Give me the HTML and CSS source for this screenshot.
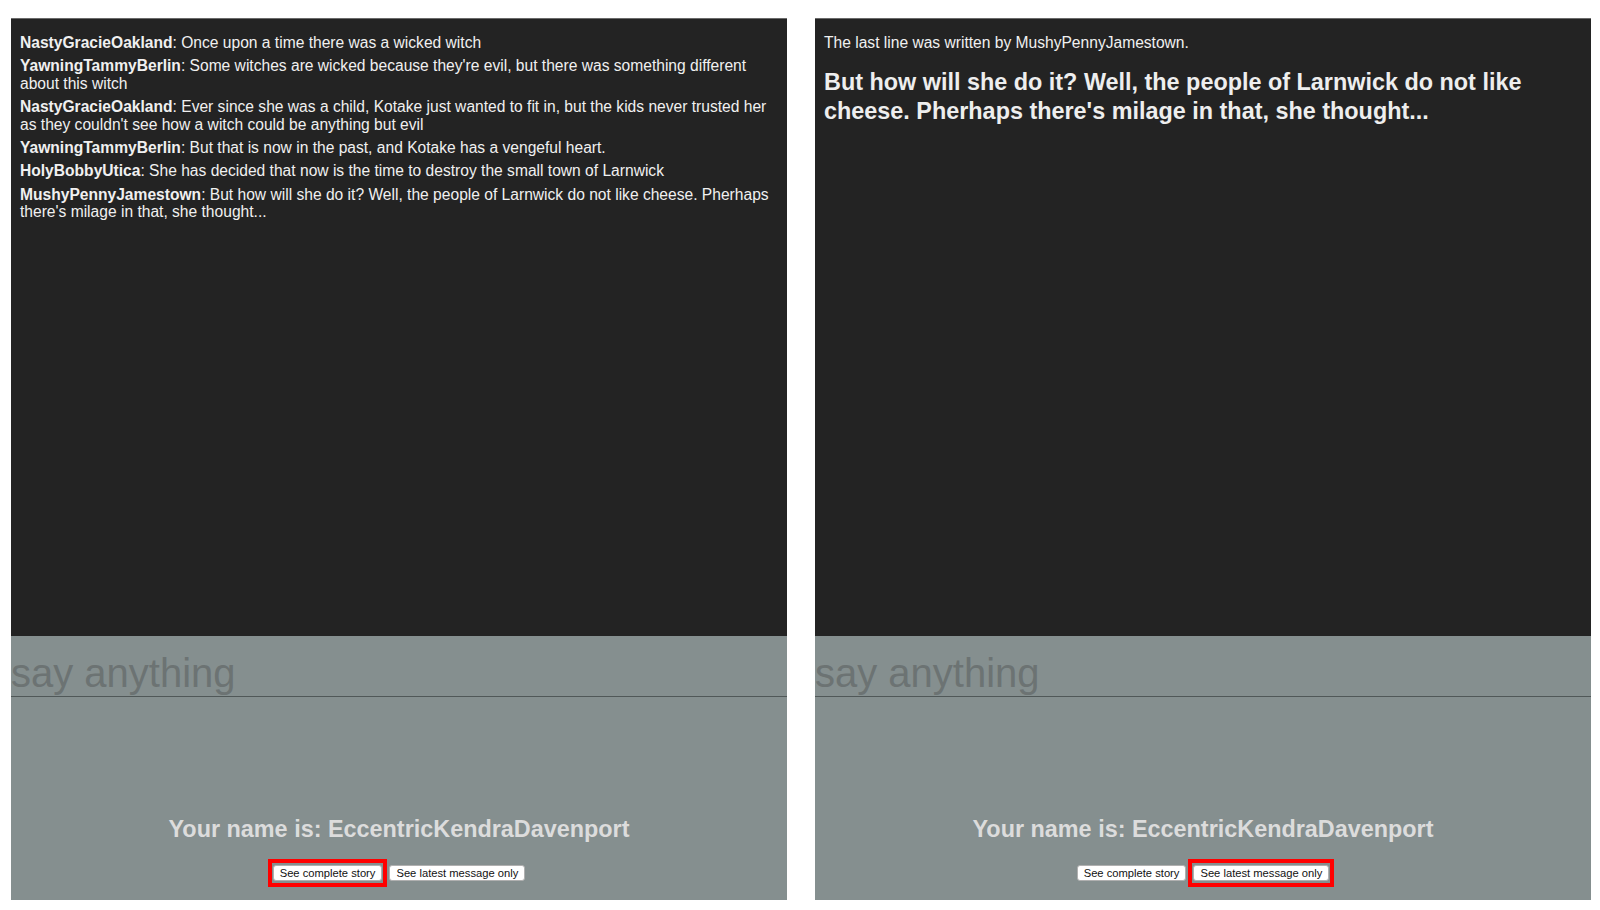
FILE: index.html
```html
<!DOCTYPE html>
<html lang="en">
<head>
<meta charset="utf-8">
<title>Story</title>
<link rel="stylesheet" href="styles.css">
</head>
<body>
<div class="page">
  <section class="panel">
    <div class="story">
      <p class="msg"><strong>NastyGracieOakland</strong>: Once upon a time there was a wicked witch</p>
      <p class="msg"><strong>YawningTammyBerlin</strong>: Some witches are wicked because they're evil, but there was something different about this witch</p>
      <p class="msg"><strong>NastyGracieOakland</strong>: Ever since she was a child, Kotake just wanted to fit in, but the kids never trusted her as they couldn't see how a witch could be anything but evil</p>
      <p class="msg"><strong>YawningTammyBerlin</strong>: But that is now in the past, and Kotake has a vengeful heart.</p>
      <p class="msg"><strong>HolyBobbyUtica</strong>: She has decided that now is the time to destroy the small town of Larnwick</p>
      <p class="msg"><strong>MushyPennyJamestown</strong>: But how will she do it? Well, the people of Larnwick do not like cheese. Pherhaps there's milage in that, she thought...</p>
    </div>
    <div class="controls">
      <input class="say" type="text" placeholder="say anything">
      <div class="footer">
        <h2 class="name">Your name is: EccentricKendraDavenport</h2>
        <div class="buttons">
          <button class="btn active">See complete story</button>
          <button class="btn">See latest message only</button>
        </div>
      </div>
    </div>
  </section>
  <section class="panel">
    <div class="story">
      <p class="msg">The last line was written by MushyPennyJamestown.</p>
      <h2 class="latest">But how will she do it? Well, the people of Larnwick do not like cheese. Pherhaps there's milage in that, she thought...</h2>
    </div>
    <div class="controls">
      <input class="say" type="text" placeholder="say anything">
      <div class="footer">
        <h2 class="name">Your name is: EccentricKendraDavenport</h2>
        <div class="buttons">
          <button class="btn">See complete story</button>
          <button class="btn active">See latest message only</button>
        </div>
      </div>
    </div>
  </section>
</div>
</body>
</html>
```
FILE: styles.css
```css
html, body {
  margin: 0;
  padding: 0;
  background: #ffffff;
  font-family: "Liberation Sans", Arial, Helvetica, sans-serif;
}

.page {
  display: flex;
  gap: 28px;
  padding: 18px 9px 10px 11px;
  height: 910px;
  box-sizing: border-box;
}

.panel {
  flex: 1;
  display: flex;
  flex-direction: column;
  height: 882px;
}

.story {
  height: 618px;
  box-sizing: border-box;
  background: #232323;
  border-top: 1px solid #6a6a6a;
  padding: 15px 9px 0 9px;
  color: #f0f0f0;
  overflow: hidden;
}

.msg {
  margin: 0 0 6px 0;
  font-size: 15.6px;
  line-height: 17.4px;
}

.msg strong {
  font-weight: bold;
}

.latest {
  margin: 17px 0 0 0;
  font-size: 23.4px;
  line-height: 28.4px;
  font-weight: bold;
  color: #eeeeee;
}

.controls {
  flex: 1;
  display: flex;
  flex-direction: column;
  background: #858f8f;
}

.say {
  display: block;
  width: 100%;
  height: 61px;
  box-sizing: border-box;
  margin: 0;
  padding: 14px 0 0 0;
  border: none;
  border-bottom: 1px solid #505858;
  background: transparent;
  font-family: "Liberation Sans", Arial, Helvetica, sans-serif;
  font-size: 40px;
  color: #333;
  outline: none;
}

.say::placeholder {
  color: #6c7373;
}

.footer {
  margin-top: auto;
  padding-bottom: 19px;
  text-align: center;
}

.name {
  margin: 0 0 22px 0;
  font-size: 23.4px;
  line-height: 28.4px;
  font-weight: bold;
  color: #dcdcdc;
}

.buttons {
  display: flex;
  justify-content: center;
  gap: 7px;
}

.btn {
  position: relative;
  margin: 0;
  padding: 1px 6px;
  height: 16px;
  box-sizing: border-box;
  border: 1px solid #b0b0b0;
  border-radius: 3px;
  background: #ffffff;
  color: #111;
  font-family: "Liberation Sans", Arial, Helvetica, sans-serif;
  font-size: 11.2px;
  line-height: 12px;
}

.btn.active::after {
  content: "";
  position: absolute;
  top: -7px;
  bottom: -7px;
  left: -6px;
  right: -6px;
  border: 4px solid #ff0000;
  pointer-events: none;
}
```
